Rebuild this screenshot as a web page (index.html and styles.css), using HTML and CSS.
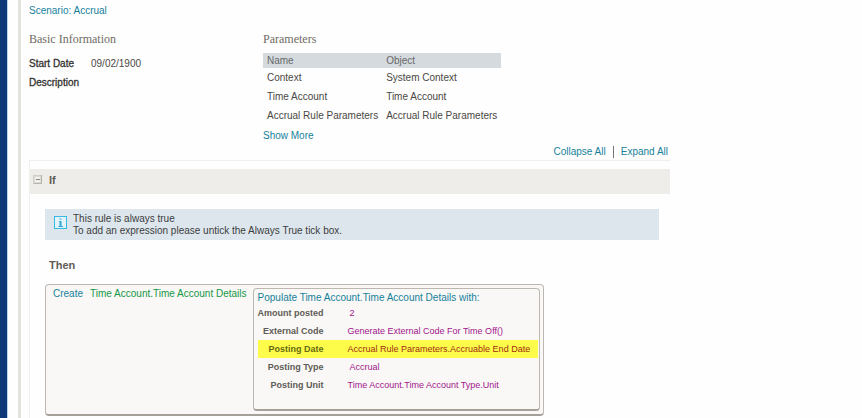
FILE: index.html
```html
<!DOCTYPE html>
<html lang="en">
<head>
    <meta charset="UTF-8">
    <meta name="viewport" content="width=device-width, initial-scale=1.0">
    <title>Scenario: Accrual</title>
    <link rel="stylesheet" href="styles.css">
</head>
<body>
    <div class="page">
        <div class="rail"></div>
        <main class="content">
            <h1 class="scenario"><a href="#">Scenario: Accrual</a></h1>

            <div class="summary">
                <section class="basic">
                    <h2>Basic Information</h2>
                    <dl class="facts">
                        <dt>Start Date</dt>
                        <dd>09/02/1900</dd>
                        <dt>Description</dt>
                        <dd></dd>
                    </dl>
                </section>
                <section>
                    <h2>Parameters</h2>
                    <table class="params">
                        <thead>
                            <tr><th>Name</th><th>Object</th></tr>
                        </thead>
                        <tbody>
                            <tr><td>Context</td><td>System Context</td></tr>
                            <tr><td>Time Account</td><td>Time Account</td></tr>
                            <tr><td>Accrual Rule Parameters</td><td>Accrual Rule Parameters</td></tr>
                        </tbody>
                    </table>
                    <a class="show-more" href="#">Show More</a>
                </section>
            </div>

            <nav class="toolbar">
                <a href="#">Collapse All</a>
                <a href="#">Expand All</a>
            </nav>

            <section class="rule">
                <div class="rule-header">
                    <button class="toggle" type="button" aria-label="Collapse">
                        <svg width="9" height="9" viewBox="0 0 9 9">
                            <rect width="9" height="9" fill="#dedcd6"/>
                            <path d="M.5 8.500V.5H8" fill="none" stroke="#d0cec8"/>
                            <path d="M8.500 0V8.500H1" fill="none" stroke="#b5b2aa"/>
                            <rect x="2" y="2" width="5" height="5" fill="#f2f1ed"/>
                            <path d="M3 4.500H7" stroke="#8d8981"/>
                        </svg>
                    </button>
                    <h3>If</h3>
                </div>
                <div class="rule-body">
                    <div class="info">
                        <svg width="13" height="13" viewBox="0 0 13 13">
                            <rect x=".5" y=".5" width="12" height="12" fill="#e2f3fa" stroke="#35b9e2"/>
                            <path d="M5.500 3H7.500M5 5.500H7M4.500 10.500H9" fill="none" stroke="#35a9d2"/>
                            <path d="M6.500 5V10" fill="none" stroke="#35a9d2" stroke-width="2"/>
                        </svg>
                        <p>This rule is always true<br>To add an expression please untick the Always True tick box.</p>
                    </div>

                    <h3>Then</h3>

                    <div class="action">
                        <div class="statement">
                            <a href="#">Create</a>
                            <a class="entity" href="#">Time Account.Time Account Details</a>
                        </div>
                        <div class="populate">
                            <a href="#">Populate Time Account.Time Account Details with:</a>
                            <table class="fields">
                                <tr><th>Amount posted</th><td class="literal">2</td></tr>
                                <tr><th>External Code</th><td>Generate External Code For Time Off()</td></tr>
                                <tr class="highlight"><th>Posting Date</th><td>Accrual Rule Parameters.Accruable End Date</td></tr>
                                <tr><th>Posting Type</th><td class="literal">Accrual</td></tr>
                                <tr><th>Posting Unit</th><td>Time Account.Time Account Type.Unit</td></tr>
                            </table>
                        </div>
                    </div>
                </div>
            </section>
        </main>
    </div>
</body>
</html>
```
FILE: styles.css
```css
:root {
    --link: #16819a;
    --text: #4a4844;
    --heading: #6f6b64;
    --value: #a3158c;
}

* {
    box-sizing: border-box;
    margin: 0;
    padding: 0;
}

body {
    font-family: "Liberation Sans", Arial, sans-serif;
    font-size: 10px;
    line-height: 12px;
    color: var(--text);
    background: #fefefe;
}

a {
    color: var(--link);
    text-decoration: none;
}

h2 {
    font: 12px/14px "Liberation Serif", "Times New Roman", serif;
    color: var(--heading);
}

h3 {
    font-size: 11px;
    line-height: 14px;
    color: #5f5c56;
}

table {
    border-collapse: collapse;
}

.page {
    display: flex;
    min-height: 100vh;
}

.rail {
    flex: none;
    width: 21px;
    background: #fefefe;
    border-left: 7px solid #0e3877;
    border-right: 3px solid #e4e2de;
    box-shadow: inset 1px 0 #b9d3ea;
}

.content {
    flex: 1;
    max-width: 649px;
    padding: 4px 0 0 8px;
}

.scenario {
    font-size: 10px;
    font-weight: normal;
    line-height: 14px;
}

.summary {
    display: flex;
    margin-top: 14px;
}

.basic {
    width: 234px;
}

.facts {
    display: grid;
    grid-template-columns: 62px 1fr;
    margin-top: 8px;
    line-height: 19px;
}

.facts dt {
    color: #33312e;
    -webkit-text-stroke: 0.3px;
}

.params {
    margin-top: 7px;
    line-height: 19px;
}

.params th {
    font-weight: normal;
    text-align: left;
    line-height: 15px;
    color: #68696a;
    background: #d4dadd;
}

.params th,
.params td {
    padding: 0 4px;
}

.show-more {
    display: block;
    margin-top: 5px;
}

.toolbar {
    display: flex;
    justify-content: flex-end;
    margin: 4px 2px 2px 0;
}

.toolbar a + a {
    margin-left: 7px;
    padding-left: 7px;
    border-left: 1px solid #77736c;
}

.rule {
    border: 1px solid #f0efec;
    border-right: 0;
    padding-top: 8px;
}

.rule-header {
    display: flex;
    align-items: center;
    gap: 7px;
    height: 25px;
    padding: 0 0 4px 3px;
    background: #eeede9;
}

.toggle {
    width: 9px;
    height: 9px;
    border: 0;
    background: none;
    cursor: pointer;
}

.toggle svg {
    display: block;
}

.rule-body {
    padding: 15px 11px 2px 15px;
}

.info {
    display: flex;
    gap: 6px;
    padding: 4px 9px 3px;
    color: #3b3d40;
    background: #dee6ed;
}

.info svg {
    margin-top: 3px;
}

.rule-body h3 {
    margin: 18px 0 12px 4px;
}

.action {
    display: flex;
    width: fit-content;
    padding: 3px;
    background: #f9f8f6;
    border: 1px solid #bcb8b1;
    border-bottom: 2px solid #a5a19a;
    border-radius: 4px;
}

.statement {
    display: flex;
    gap: 7px;
    padding: 0 6px 0 4px;
}

.statement .entity {
    color: #159647;
}

.populate {
    padding: 3px 1px 15px 4px;
    border: 1px solid #bcb8b1;
    border-bottom: 2px solid #a5a19a;
    border-radius: 4px;
}

.fields {
    font-size: 9px;
    line-height: 18px;
}

.fields th {
    padding-right: 24px;
    text-align: right;
    font-weight: bold;
    color: #5f5c57;
}

.fields td {
    padding-right: 8px;
    color: var(--value);
}

.fields .literal {
    padding-left: 2px;
}

.fields .highlight {
    background: #fdfc4a;
}

.fields .highlight th {
    color: #666a10;
}

.fields .highlight td {
    color: #a02d10;
}
```
